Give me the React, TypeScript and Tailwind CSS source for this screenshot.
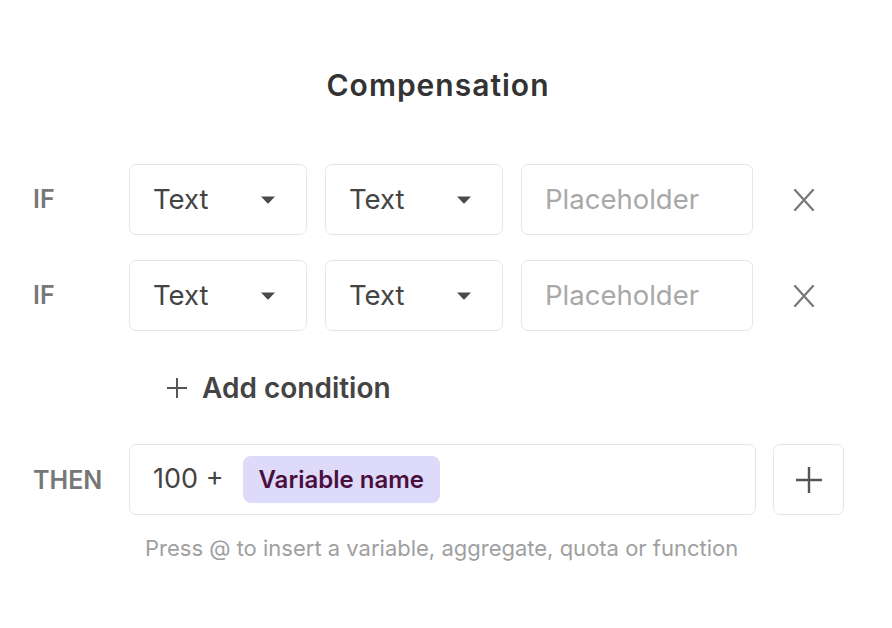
const font = { fontFamily: "Inter, 'Noto Sans', sans-serif" };

const Caret = () => (
  <svg width="16" height="8" viewBox="0 0 16 8" className="shrink-0">
    <path d="M1 0.5 H15 L8.6 7.2 Q8 7.8 7.4 7.2 Z" fill="#4a4a4a" />
  </svg>
);

const Select = ({ label }: { label: string }) => (
  <div className="flex h-[71px] w-[178px] items-center justify-between rounded-[7px] border border-[#e6e6e6] bg-white pl-[23px] pr-[30px]">
    <span className="text-[27.5px] text-[#444]">{label}</span>
    <Caret />
  </div>
);

const ConditionRow = () => (
  <div className="flex items-center">
    <span className="w-[96px] text-[25px] font-semibold text-[#777]">IF</span>
    <div className="flex items-center gap-[18px]">
      <Select label="Text" />
      <Select label="Text" />
      <div className="flex h-[71px] w-[232px] items-center rounded-[7px] border border-[#e6e6e6] bg-white px-[23px]">
        <span className="text-[27.5px] text-[#a8a8a8]">Placeholder</span>
      </div>
    </div>
    <button className="ml-[41px] flex h-[22px] w-[20px] items-center justify-center">
      <svg width="20" height="22" viewBox="0 0 20 22">
        <path d="M1 1 L19 21 M19 1 L1 21" stroke="#777" strokeWidth="2.2" strokeLinecap="round" />
      </svg>
    </button>
  </div>
);

export default function App() {
  return (
    <div className="h-[628px] w-[892px] bg-white pl-[33px] pt-[67px]" style={font}>
      <h1 className="w-[810px] text-center text-[30px] font-semibold leading-[36px] tracking-[1px] text-[#333]">
        Compensation
      </h1>

      <div className="mt-[61px] flex flex-col gap-[25px]">
        <ConditionRow />
        <ConditionRow />
      </div>

      <div className="ml-[133px] mt-[41px] flex items-center gap-[14px]">
        <svg width="22" height="22" viewBox="0 0 22 22">
          <path d="M11 1 V21 M1 11 H21" stroke="#555" strokeWidth="2" />
        </svg>
        <span className="text-[28px] font-semibold leading-[32px] text-[#444]">Add condition</span>
      </div>

      <div className="mt-[40px] flex items-center">
        <span className="w-[96px] pt-[3px] text-[25px] font-semibold text-[#777]">THEN</span>
        <div className="flex h-[71px] w-[627px] items-center gap-[19px] rounded-[7px] border border-[#e6e6e6] bg-white pl-[23px]">
          <span className="text-[27px] text-[#444]">100 +</span>
          <span className="flex h-[47px] items-center rounded-[8px] bg-[#dedafa] px-[16px] text-[24px] font-semibold text-[#4a0f3d]">
            Variable name
          </span>
        </div>
        <button className="ml-[17px] flex h-[71px] w-[71px] items-center justify-center rounded-[7px] border border-[#e6e6e6] bg-white">
          <svg width="26" height="26" viewBox="0 0 26 26">
            <path d="M13 0 V26 M0 13 H26" stroke="#555" strokeWidth="2.4" />
          </svg>
        </button>
      </div>

      <p className="ml-[112px] mt-[18px] text-[22px] leading-[30px] text-[#a0a0a0]">
        Press @ to insert a variable, aggregate, quota or function
      </p>
    </div>
  );
}
